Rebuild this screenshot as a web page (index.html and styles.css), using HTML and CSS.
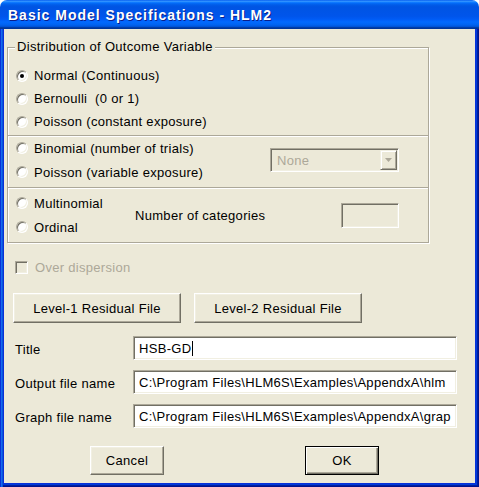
FILE: index.html
```html
<!DOCTYPE html>
<html>
<head>
<meta charset="utf-8">
<title>Basic Model Specifications - HLM2</title>
<link rel="stylesheet" href="styles.css">
</head>
<body>
<div class="window">
  <div class="titlebar"><span class="title">Basic Model Specifications - HLM2</span></div>
  <div class="frame">
    <div class="client">
      <fieldset class="group">
        <legend>Distribution of Outcome Variable</legend>
        <div class="sec sec1">
          <div class="opt"><span class="radio on"></span>Normal (Continuous)</div>
          <div class="opt"><span class="radio"></span>Bernoulli&nbsp; (0 or 1)</div>
          <div class="opt"><span class="radio"></span>Poisson (constant exposure)</div>
        </div>
        <div class="sec sec2">
          <div class="col col2">
            <div class="opt2"><span class="radio"></span>Binomial (number of trials)</div>
            <div class="opt2"><span class="radio"></span>Poisson (variable exposure)</div>
          </div>
          <div class="combo">
            <span class="combo-text">None</span>
            <span class="combo-btn"><svg width="7" height="4" viewBox="0 0 7 4"><path d="M0 0h7L3.5 4z" fill="#ACA899"/></svg></span>
          </div>
        </div>
        <div class="sec sec3">
          <div class="col col3">
            <div class="opt2"><span class="radio"></span>Multinomial</div>
            <div class="opt2"><span class="radio"></span>Ordinal</div>
          </div>
          <span class="cat-label">Number of categories</span>
          <div class="field field-disabled cat-field"></div>
        </div>
      </fieldset>

      <div class="check-row">
        <span class="checkbox"></span><span class="check-label">Over dispersion</span>
      </div>

      <div class="btn-row">
        <div class="btn wide">Level-1 Residual File</div>
        <div class="btn wide">Level-2 Residual File</div>
      </div>

      <div class="form">
        <div class="form-row">
          <span class="form-label">Title</span>
          <div class="field text-field">HSB-GD<span class="caret"></span></div>
        </div>
        <div class="form-row">
          <span class="form-label">Output file name</span>
          <div class="field text-field">C:\Program Files\HLM6S\Examples\AppendxA\hlm</div>
        </div>
        <div class="form-row">
          <span class="form-label">Graph file name</span>
          <div class="field text-field">C:\Program Files\HLM6S\Examples\AppendxA\grap</div>
        </div>
      </div>

      <div class="footer">
        <div class="btn small">Cancel</div>
        <div class="btn small default">OK</div>
      </div>
    </div>
  </div>
</div>
</body>
</html>
```
FILE: styles.css
```css
* { box-sizing: border-box; }
html, body { margin: 0; padding: 0; background: #fff; }
body {
  font-family: "Liberation Sans", Arial, sans-serif;
  font-size: 13px;
  letter-spacing: 0.3px;
  color: #000;
}
.window {
  width: 479px;
  height: 487px;
  display: flex;
  flex-direction: column;
}
.titlebar {
  flex: none;
  height: 29px;
  border-radius: 7px 7px 0 0;
  background: linear-gradient(180deg, #0058EE 0%, #3593FF 4%, #288EFF 6%, #127DFF 8%, #036FFC 10%, #0262EE 14%, #0057E5 20%, #0054E3 24%, #0055EB 56%, #005BF5 66%, #026AFE 76%, #0062EF 86%, #0052D6 92%, #0040AB 94%, #003092 100%);
  display: flex;
  align-items: center;
  padding-left: 8px;
  padding-top: 1px;
}
.title {
  color: #fff;
  font-weight: bold;
  font-size: 14px;
  letter-spacing: 1px;
  text-shadow: 1px 1px #0A1E8A;
}
.frame {
  flex: 1;
  display: flex;
  padding: 0 4px 4px 4px;
  background: #0831D9;
  box-shadow: inset 1px 0 #0831D9, inset 2px 0 #166AEE, inset 3px 0 #0855DD,
              inset -1px -1px #00138C, inset -2px -2px #001EA0, inset -3px -3px #003BDA;
}
.client {
  flex: 1;
  background: #ECE9D8;
  display: flex;
  flex-direction: column;
}

/* group box */
.group {
  margin: 11px 0 0 3px;
  width: 422px;
  padding: 0;
  min-width: 0;
  border: 1px solid #ACA899;
  box-shadow: inset 1px 1px #fff, 1px 1px #fff;
}
.group legend {
  margin-left: 7px;
  padding: 0 2px;
  line-height: 14px;
  background: #ECE9D8;
}
.sec { padding-left: 8px; }
.sec1 { padding-top: 10px; padding-bottom: 2px; }
.sec2, .sec3 {
  border-top: 1px solid #ACA899;
  box-shadow: inset 0 1px #fff;
  display: flex;
  align-items: center;
}
.sec2 { padding-bottom: 3px; }
.sec3 { padding-top: 3px; padding-bottom: 3px; }
.opt { height: 23px; display: flex; align-items: center; }
.opt2 { height: 24px; display: flex; align-items: center; }
.col2 { width: 254px; }
.col3 { width: 119px; }
.cat-label { width: 206px; }

.radio {
  position: relative;
  flex: none;
  width: 12px;
  height: 12px;
  margin-right: 6px;
  border-radius: 50%;
  background: #fff;
  border: 1px solid;
  border-color: #ACA899 #fff #fff #ACA899;
  box-shadow: inset 1px 1px #716F64, inset -1px -1px #F1EFE2;
}
.radio.on::after {
  content: "";
  position: absolute;
  left: 3px;
  top: 3px;
  width: 4px;
  height: 4px;
  border-radius: 50%;
  background: #000;
}

/* sunken fields */
.field, .combo, .checkbox {
  border: 1px solid;
  border-color: #ACA899 #fff #fff #ACA899;
  box-shadow: inset 1px 1px #716F64, inset -1px -1px #F1EFE2;
}
.combo {
  width: 129px;
  height: 24px;
  background: #ECE9D8;
  display: flex;
  align-items: stretch;
  padding: 1px;
}
.combo-text {
  flex: 1;
  padding-left: 5px;
  color: #ACA899;
  display: flex;
  align-items: center;
}
.combo-btn {
  width: 17px;
  display: flex;
  align-items: center;
  justify-content: center;
  border: 1px solid;
  border-color: #F1EFE2 #716F64 #716F64 #F1EFE2;
  box-shadow: inset 1px 1px #fff, inset -1px -1px #ACA899;
}
.cat-field {
  width: 58px;
  height: 25px;
  background: #ECE9D8;
}

.check-row {
  margin: 18px 0 0 11px;
  height: 13px;
  display: flex;
  align-items: center;
}
.checkbox {
  width: 13px;
  height: 13px;
  background: #ECE9D8;
  margin-right: 7px;
}
.check-label { color: #ACA899; }

.btn {
  display: flex;
  align-items: center;
  justify-content: center;
  background: #ECE9D8;
  border: 1px solid;
  border-color: #fff #716F64 #716F64 #fff;
  box-shadow: inset -1px -1px #ACA899, inset 1px 1px #F1EFE2;
}
.btn-row {
  margin: 19px 0 0 9px;
  display: flex;
  gap: 13px;
}
.btn.wide { width: 168px; height: 30px; }

.form {
  margin-top: 13px;
  display: flex;
  flex-direction: column;
  gap: 10px;
}
.form-row {
  display: flex;
  align-items: center;
  height: 24px;
  padding-left: 11px;
}
.form-label { width: 118px; padding-top: 2px; }
.text-field {
  width: 324px;
  height: 24px;
  background: #fff;
  padding: 0 3px 0 5px;
  display: flex;
  align-items: center;
  white-space: nowrap;
  overflow: hidden;
}
.caret {
  display: inline-block;
  width: 1px;
  height: 15px;
  background: #000;
  margin-left: 1px;
}

.footer {
  margin: 18px 0 0 86px;
  display: flex;
  gap: 141px;
}
.btn.small { width: 74px; height: 29px; }
.btn.default {
  border-color: #000;
  box-shadow: inset 1px 1px #fff, inset -1px -1px #716F64, inset -2px -2px #ACA899;
}
```
